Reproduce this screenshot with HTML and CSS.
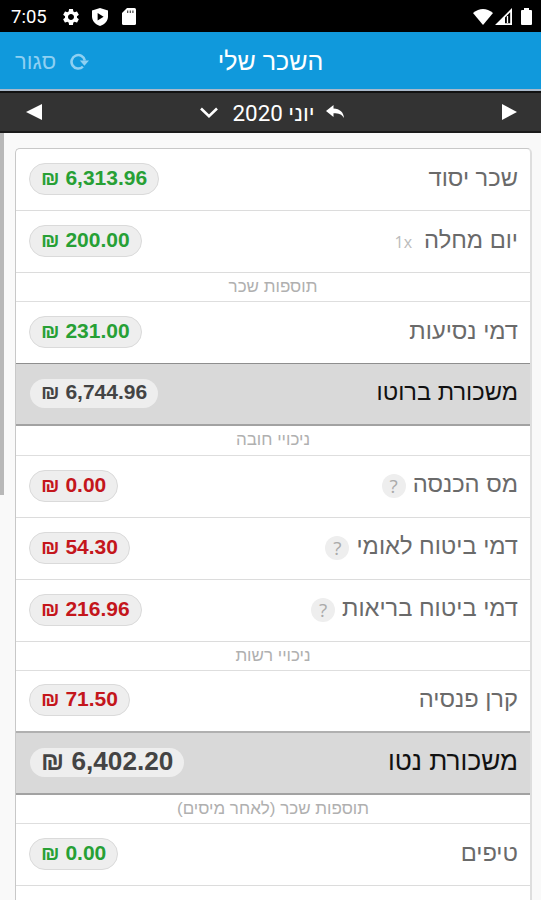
FILE: index.html
```html
<!DOCTYPE html>
<html lang="he" dir="rtl">
<head>
    <meta charset="UTF-8">
    <meta name="viewport" content="width=device-width, initial-scale=1.0">
    <title>השכר שלי</title>
    <link rel="stylesheet" href="styles.css">
</head>
<body>
    <div class="status-bar" dir="ltr">
        <span class="clock">7:05</span>
        <svg class="icon-gear" width="20" height="20" viewBox="0 0 24 24"><path fill="#fff" d="M19.14 12.94c.04-.3.06-.61.06-.94 0-.32-.02-.64-.07-.94l2.03-1.58c.18-.14.23-.41.12-.61l-1.92-3.32c-.12-.22-.37-.29-.59-.22l-2.39.96c-.5-.38-1.03-.7-1.62-.94l-.36-2.54c-.04-.24-.24-.41-.48-.41h-3.84c-.24 0-.43.17-.47.41l-.36 2.54c-.59.24-1.13.57-1.62.94l-2.39-.96c-.22-.08-.47 0-.59.22L2.74 8.87c-.12.21-.08.47.12.61l2.03 1.58c-.05.3-.09.63-.09.94s.02.64.07.94l-2.03 1.58c-.18.14-.23.41-.12.61l1.92 3.32c.12.22.37.29.59.22l2.39-.96c.5.38 1.03.7 1.62.94l.36 2.54c.05.24.24.41.48.41h3.84c.24 0 .44-.17.47-.41l.36-2.54c.59-.24 1.13-.56 1.62-.94l2.39.96c.22.08.47 0 .59-.22l1.92-3.32c.12-.22.07-.47-.12-.61l-2.01-1.58zM12 15.6c-1.98 0-3.6-1.62-3.6-3.6s1.620-3.600 3.600-3.600 3.600 1.620 3.600 3.600-1.620 3.600-3.600 3.600z"/></svg>
        <svg class="icon-shield" width="16" height="18" viewBox="0 0 16 18"><path fill="#fff" d="M8 0l8 2.600v6c0 4.400-3.200 7.800-8 9.400-4.800-1.600-8-5-8-9.400v-6z"/><path d="M5.600 5l6 3.700-6 3.700z"/></svg>
        <svg class="icon-sd" width="14" height="17" viewBox="0 0 14 17"><path fill="#fff" d="M5 0h7.500Q14 0 14 1.500v14q0 1.500-1.500 1.500h-11Q0 17 0 15.500V5z"/><path stroke="#444" stroke-width="1.200" d="M5.700 2.500v2.500M8.300 2.500v2.500M10.900 2.500v2.500"/></svg>
        <div class="status-right">
            <svg width="20" height="16" viewBox="0 0 20 16"><path fill="#fff" d="M0 4Q10-4 20 4L10 16z"/></svg>
            <svg width="17" height="17" viewBox="0 0 17 17"><path fill="#fff" fill-rule="evenodd" d="M0 17L17 0v17zM10 9.400v5.800h5.200V4.200z"/><path stroke="#fff" stroke-width="1.300" d="M12.500 8v7"/></svg>
            <svg class="icon-battery" width="11" height="17" viewBox="0 0 11 17"><path fill="#fff" d="M3 0h5v2h2q1 0 1 1v13q0 1-1 1H1q-1 0-1-1V3q0-1 1-1h2z"/></svg>
        </div>
    </div>

    <header class="header">
        <div></div>
        <h1>השכר שלי</h1>
        <div class="header-actions">
            <svg width="19" height="17" viewBox="0 0 19 17"><path fill="none" stroke="currentColor" stroke-width="2.600" d="M12.900 13.600A6.700 6.700 0 1 1 14.800 7.500"/><path fill="currentColor" d="M9.800 7.500h9.200l-4.600 5.300z"/></svg>
            <a class="close">סגור</a>
        </div>
    </header>

    <nav class="month-bar">
        <svg width="15" height="16" viewBox="0 0 15 16"><path fill="#fff" d="M0 0l15 8-15 8z"/></svg>
        <div class="month">
            <svg width="18" height="14" viewBox="0 0 18 14"><path fill="#fff" d="M0 6L7.500 0v3.400C14 3.800 17.500 7 18 13c-2.200-3.800-5-4.800-10.500-4.800V12z"/></svg>
            <span class="month-name">יוני 2020</span>
            <svg class="chevron" width="18" height="11" viewBox="0 0 18 11"><path fill="none" stroke="#fff" stroke-width="2.600" d="M1 1.500l8 7.700 8-7.700"/></svg>
        </div>
        <svg width="16" height="16" viewBox="0 0 16 16"><path fill="#fff" d="M16 0L0 8l16 8z"/></svg>
    </nav>

    <main class="content">
        <div class="scrollbar"></div>
        <div class="list">
            <div class="row">
                <span class="name">שכר יסוד</span>
                <span class="amount green" dir="ltr">₪ 6,313.96</span>
            </div>
            <div class="row">
                <span class="name">יום מחלה</span>
                <span class="count" dir="ltr">1x</span>
                <span class="amount green" dir="ltr">₪ 200.00</span>
            </div>
            <div class="divider">תוספות שכר</div>
            <div class="row before-total">
                <span class="name">דמי נסיעות</span>
                <span class="amount green" dir="ltr">₪ 231.00</span>
            </div>
            <div class="row total">
                <span class="name">משכורת ברוטו</span>
                <span class="amount" dir="ltr">₪ 6,744.96</span>
            </div>
            <div class="divider">ניכויי חובה</div>
            <div class="row">
                <span class="name">מס הכנסה</span>
                <span class="help">?</span>
                <span class="amount red" dir="ltr">₪ 0.00</span>
            </div>
            <div class="row">
                <span class="name">דמי ביטוח לאומי</span>
                <span class="help">?</span>
                <span class="amount red" dir="ltr">₪ 54.30</span>
            </div>
            <div class="row">
                <span class="name">דמי ביטוח בריאות</span>
                <span class="help">?</span>
                <span class="amount red" dir="ltr">₪ 216.96</span>
            </div>
            <div class="divider">ניכויי רשות</div>
            <div class="row before-total net-line">
                <span class="name">קרן פנסיה</span>
                <span class="amount red" dir="ltr">₪ 71.50</span>
            </div>
            <div class="row total net">
                <span class="name">משכורת נטו</span>
                <span class="amount" dir="ltr">₪ 6,402.20</span>
            </div>
            <div class="divider">תוספות שכר (לאחר מיסים)</div>
            <div class="row">
                <span class="name">טיפים</span>
                <span class="amount green" dir="ltr">₪ 0.00</span>
            </div>
        </div>
    </main>
</body>
</html>
```
FILE: styles.css
```css
* {
    box-sizing: border-box;
}

body {
    margin: 0;
    height: 900px;
    overflow: hidden;
    display: flex;
    flex-direction: column;
    background: #f9f9f9;
    font-family: 'Liberation Sans', Arial, sans-serif;
}

svg {
    display: block;
    flex: none;
}

/* android status bar */
.status-bar {
    height: 32px;
    flex: none;
    display: flex;
    align-items: center;
    padding: 1px 9px 0 11px;
    background: #000;
    color: #fff;
}

.clock {
    width: 50px;
    font-family: Roboto, sans-serif;
    font-size: 18.5px;
}

.icon-shield {
    margin-left: 11px;
}

.icon-sd {
    margin-left: 14px;
}

.status-right {
    display: flex;
    align-items: center;
    gap: 2px;
    margin-left: auto;
}

.icon-battery {
    margin-left: 7px;
}

/* header */
.header {
    height: 59px;
    flex: none;
    display: grid;
    grid-template-columns: 1fr auto 1fr;
    align-items: center;
    padding: 2px 15px 0;
    background: #1099dc;
    border-bottom: 2px solid #a9b9cb;
    color: #fff;
}

.header h1 {
    margin: 0;
    font-size: 25px;
    font-weight: 400;
}

.header-actions {
    display: flex;
    align-items: center;
    justify-content: flex-end;
    gap: 14px;
    color: #8ed0f2;
}

.close {
    font-size: 22px;
}

.month-bar {
    height: 42px;
    flex: none;
    display: flex;
    align-items: center;
    justify-content: space-between;
    padding: 0 24px 0 26px;
    background: #333;
    border-top: 2px solid #111;
    border-bottom: 2px solid #1a1a1a;
    color: #fff;
}

.month {
    display: flex;
    align-items: center;
    gap: 11px;
    font-family: Roboto, 'Liberation Sans', sans-serif;
    font-size: 22.4px;
}

.month-name {
    padding-top: 2px;
}

.chevron {
    margin-right: 3px;
}

/* salary list */
.content {
    position: relative;
    flex: 1;
    min-height: 0;
    padding: 15px 9px 0 15px;
    direction: ltr;
}

.scrollbar {
    position: absolute;
    left: 0;
    top: 0;
    width: 4px;
    height: 362px;
    background: #b8b8b8;
}

/* runs on under the bottom edge of the screen */
.list {
    height: 100%;
    direction: rtl;
    background: #fff;
    border: 1px solid #c8c8c8;
    border-right: 2px solid #dedede;
    border-bottom: none;
    border-radius: 5px 5px 0 0;
}

.row {
    height: 62px;
    display: flex;
    align-items: center;
    padding: 0 12px 0 13px;
    border-bottom: 1px solid #dcdcdc;
}

.name {
    padding-bottom: 4px;
    color: #6a6a6a;
    font-size: 23.7px;
    line-height: 30px;
}

.count {
    margin: 1px 12px 0 0;
    color: #bbb;
    font-family: 'Open Sans', sans-serif;
    font-size: 16px;
}

.help {
    width: 24px;
    height: 24px;
    margin: 0 7px 0 0;
    border-radius: 50%;
    background: #eee;
    color: #aaa;
    font-family: 'Open Sans', sans-serif;
    font-size: 19px;
    line-height: 24px;
    text-align: center;
}

.amount {
    height: 32px;
    margin: 0 auto 1px 0;
    padding: 0 11px;
    border: 1px solid #dadada;
    border-radius: 16px;
    background: #eee;
    color: #444;
    font-size: 21px;
    font-weight: bold;
    line-height: 27px;
    white-space: nowrap;
}

.green {
    color: #27a035;
}

.red {
    color: #c4161c;
}

.divider {
    height: 29.25px;
    border-bottom: 1px solid #dedede;
    color: #b0b0b0;
    font-size: 17px;
    line-height: 27px;
    text-align: center;
}

.before-total {
    border-bottom-color: #8e8e8e;
}

.net-line {
    border-bottom: 2px solid #b0b0b0;
}

.total {
    background: #d9d9d9;
    border-bottom: 2px solid #a2a2a2;
}

.total .name {
    color: #111;
}

.total .amount {
    height: 29px;
    margin-left: 1px;
    border: none;
    line-height: 26px;
}

.net .name {
    padding-bottom: 3px;
    font-size: 26.2px;
}

.net .amount {
    margin-bottom: 0;
    font-size: 26.2px;
}
```
